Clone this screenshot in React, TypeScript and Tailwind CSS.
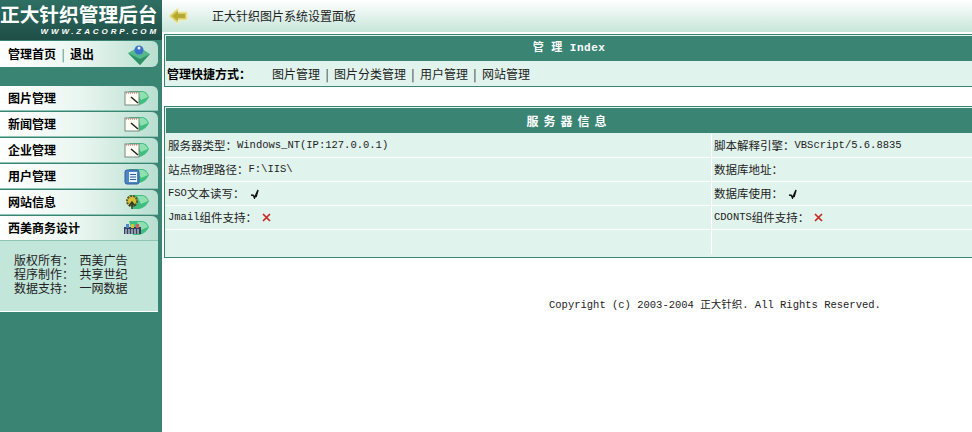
const cjk = { fontFamily: '"Noto Sans CJK SC", "Liberation Sans", sans-serif' };

function Swoosh() {
  return (
    <g>
      <path d="M6 3 L19 3 C23 3 25 7 26 9 C24 13 21 16 16 17 L10 17 Z" fill="#3fbf7f" />
      <path d="M14 4 L20 4 C23 5 24 7 25 9 L18 12 Z" fill="#8fe0b0" />
    </g>
  );
}

function Icon({ type }: { type: string }) {
  return (
    <svg width="28" height="20" viewBox="0 0 28 20" className="shrink-0">
      <Swoosh />
      {type === "note" && (
        <g>
          <rect x="2" y="4" width="14" height="13" fill="#fdfdf4" stroke="#7a8a80" strokeWidth="1" />
          <path d="M3 5 H15" stroke="#c0564c" strokeWidth="1" strokeDasharray="1 1" />
          <path d="M8 9 L15 15" stroke="#222" strokeWidth="1.5" />
        </g>
      )}
      {type === "list" && (
        <g>
          <rect x="2" y="4" width="14" height="14" rx="2" fill="#4f86c6" stroke="#2f5f9c" />
          <rect x="6" y="6" width="8" height="10" fill="#e8f2fb" />
          <path d="M7 8.5 H13 M7 11 H13 M7 13.5 H13" stroke="#2f5f9c" strokeWidth="1" />
        </g>
      )}
      {type === "user" && (
        <g>
          <circle cx="9" cy="9" r="5" fill="#d8c23c" stroke="#5d5a20" strokeDasharray="2 1" strokeWidth="2" />
          <path d="M6 14 L9 10 L12 14 M9 10 V17" stroke="#2b3d2a" strokeWidth="1.5" fill="none" />
        </g>
      )}
      {type === "people" && (
        <g>
          <path d="M1 9 H18 V16 H1 Z" fill="#34405c" />
          <rect x="3" y="6" width="3" height="4" fill="#4f86c6" />
          <rect x="8" y="6" width="3" height="4" fill="#d8c23c" />
          <rect x="13" y="6" width="3" height="4" fill="#d65a5a" />
          <path d="M3 11 V16 M6 11 V16 M9 11 V16 M12 11 V16 M15 11 V16" stroke="#e8f2fb" strokeWidth="1" />
        </g>
      )}
    </svg>
  );
}

function MenuItem({ label, icon, h = "h-[25px]" }: { label: string; icon: string; h?: string }) {
  return (
    <div className={`${h} w-[158px] rounded-tr-[6px] bg-gradient-to-r from-white via-[#eaf6f1] to-[#b8dfd1] flex items-center justify-between pl-2 pr-[7px] border-b border-[#8fc5b5]`}>
      <span className="text-[12px] font-bold text-black leading-none" style={cjk}>{label}</span>
      <Icon type={icon} />
    </div>
  );
}

function Check() {
  return (
    <svg width="10" height="10" viewBox="0 0 10 10" className="inline-block align-[-1px]">
      <path d="M1 6 L3.5 6.5 L4.5 9 L8 1 L6 8" fill="none" stroke="#111" strokeWidth="1.5" />
    </svg>
  );
}

function Cross() {
  return (
    <svg width="9" height="9" viewBox="0 0 9 9" className="inline-block align-[-1px]">
      <path d="M1 1 L8 8 M8 1 L1 8" stroke="#c8281e" strokeWidth="1.7" />
    </svg>
  );
}

function Mono({ children }: { children: React.ReactNode }) {
  return <span className="text-[10.5px]" style={{ fontFamily: '"Liberation Mono", "Noto Sans CJK SC", monospace' }}>{children}</span>;
}

function Row({ left, right, h = "h-[24px]" }: { left: React.ReactNode; right: React.ReactNode; h?: string }) {
  return (
    <div className={`flex ${h} border-b border-white last:border-b-0`}>
      <div className="w-[546px] pl-[2px] flex items-center gap-0 border-r border-white whitespace-pre">{left}</div>
      <div className="flex-1 pl-[2px] flex items-center whitespace-pre">{right}</div>
    </div>
  );
}

export default function App() {
  return (
    <div className="relative w-[972px] h-[432px] overflow-hidden bg-white flex text-[11px] text-[#111]" style={cjk}>
      <aside className="w-[162px] h-full bg-[#3a8474] shrink-0 flex flex-col">
        <div className="h-[40px] w-[162px] bg-gradient-to-b from-[#2f6f63] to-[#1f4e47] overflow-hidden">
          <div className="text-[19.7px] leading-[27px] font-bold text-white whitespace-nowrap" style={cjk}>正大针织管理后台</div>
          <div className="text-[8px] leading-[10px] font-bold italic text-white text-right pr-[3px] tracking-[2.9px] whitespace-nowrap" style={{ fontFamily: '"Liberation Sans", sans-serif' }}>WWW.ZACORP.COM</div>
        </div>
        <div className="mt-[1px] h-[26px] w-[158px] rounded-tr-[6px] rounded-br-[6px] bg-gradient-to-r from-white via-[#eaf6f1] to-[#b8dfd1] flex items-center justify-between pl-2 pr-[7px]">
          <span className="text-[12px] font-bold leading-none whitespace-pre text-black" style={cjk}>管理首页<span className="font-normal text-[#3a8474]">  |  </span>退出</span>
          <svg width="24" height="24" viewBox="0 0 24 24" className="shrink-0">
            <path d="M1 11 L12 5 L23 12 L13 23 Z" fill="#55b88a" />
            <path d="M1 11 L13 17 L23 12 L13 23 Z" fill="#2f9266" />
            <circle cx="12" cy="8" r="4.5" fill="#3a6fd0" />
            <circle cx="12" cy="6" r="1.5" fill="#e8f2fb" />
          </svg>
        </div>
        <div className="mt-[19px] flex flex-col gap-[1px]">
          <MenuItem label="图片管理" icon="note" />
          <MenuItem label="新闻管理" icon="note" />
          <MenuItem label="企业管理" icon="note" />
          <MenuItem label="用户管理" icon="list" />
          <MenuItem label="网站信息" icon="user" />
          <MenuItem label="西美商务设计" icon="people" />
        </div>
        <div className="w-[158px] h-[71px] bg-[#c3e6da] border-b border-white pt-[12px] pl-[14px] text-[12px] leading-[14px] text-[#222]" style={cjk}>
          <div className="whitespace-pre">版权所有：  西美广告</div>
          <div className="whitespace-pre">程序制作：  共享世纪</div>
          <div className="whitespace-pre">数据支持：  一网数据</div>
        </div>
      </aside>

      <main className="flex-1 flex flex-col min-w-0">
        <div className="h-[32px] bg-gradient-to-b from-white to-[#c6e6da] flex items-center pl-[6px] shrink-0">
          <svg width="20" height="18" viewBox="0 0 20 18" className="shrink-0">
            <path d="M1 9 L10 1 V5 H19 V13 H10 V17 Z" fill="#d9cf6a" stroke="#f2eeb0" strokeWidth="1" />
            <path d="M4 9 L10 4 V7 H17 V11 H10 V14 Z" fill="#b5a92f" />
          </svg>
          <span className="ml-[24px] text-[12px] text-[#222]" style={cjk}>正大针织图片系统设置面板</span>
        </div>

        <section className="ml-[2px] mt-[2px] h-[53px] border border-[#3a8474] border-r-0 flex flex-col bg-[#e1f3ed] p-[1px] pr-0">
          <div className="h-[25px] bg-[#3a8474] text-white font-bold text-[11px] flex items-center justify-center tracking-[0.5px]" style={{ fontFamily: '"Liberation Mono", "Noto Sans CJK SC", monospace' }}>管 理 Index</div>
          <div className="flex-1 flex items-center mt-[1px] text-[12px] whitespace-pre" style={cjk}>
            <div className="w-[106px] font-bold pl-[1px] text-black">管理快捷方式：</div>
            <div className="text-[#222]">图片管理  |  图片分类管理  |  用户管理  |  网站管理</div>
          </div>
        </section>

        <section className="ml-[2px] mt-[19px] h-[152px] border border-[#3a8474] border-r-0 bg-[#e1f3ed] flex flex-col p-[1px] pr-0">
          <div className="h-[25px] bg-[#3a8474] text-white font-bold text-[12px] flex items-center justify-center tracking-[5px]" style={cjk}>服务器信息</div>
          <div className="mt-[1px] flex flex-col text-[11.5px] text-[#222]">
            <Row left={<>服务器类型：<Mono>Windows_NT(IP:127.0.0.1)</Mono></>} right={<>脚本解释引擎：<Mono>VBScript/5.6.8835</Mono></>} />
            <Row left={<>站点物理路径：<Mono>F:\IIS\</Mono></>} right={<>数据库地址：</>} />
            <Row left={<><Mono>FSO</Mono>文本读写：  <Check /></>} right={<>数据库使用：  <Check /></>} />
            <Row left={<><Mono>Jmail</Mono>组件支持：  <Cross /></>} right={<><Mono>CDONTS</Mono>组件支持：  <Cross /></>} />
            <Row h="h-[24px]" left={null} right={null} />
          </div>
        </section>

        <div className="mt-[40px] pl-[387px] whitespace-pre text-[10.5px] text-[#222]" style={{ fontFamily: '"Liberation Mono", "Noto Sans CJK SC", monospace' }}>Copyright (c) 2003-2004 正大针织. All Rights Reserved.</div>
      </main>
    </div>
  );
}
